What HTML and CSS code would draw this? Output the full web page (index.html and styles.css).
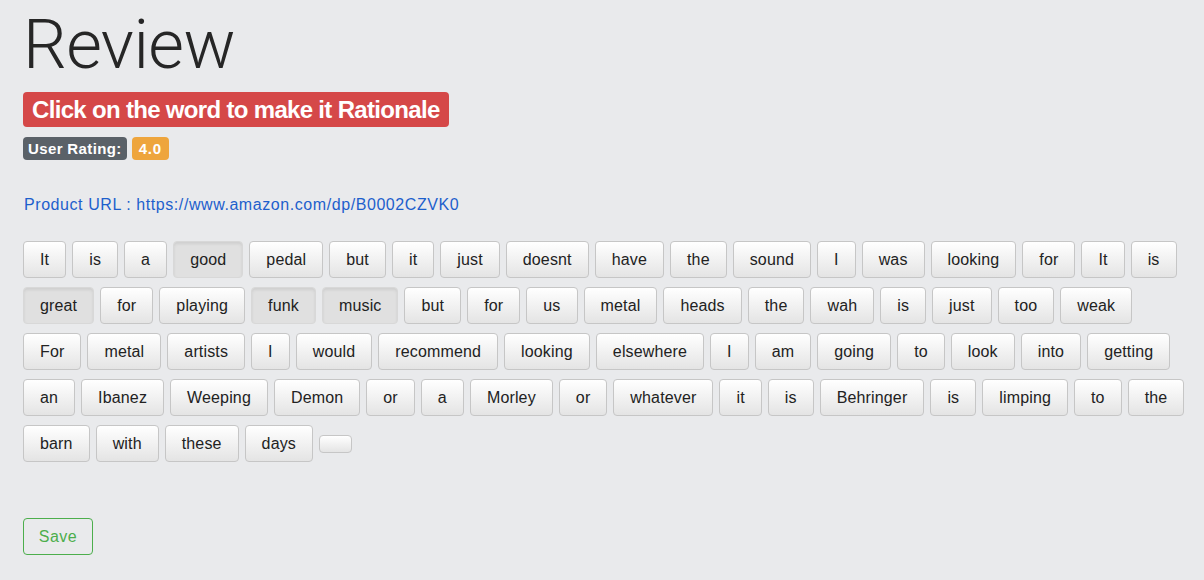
FILE: index.html
```html
<!DOCTYPE html>
<html>
<head>
<meta charset="utf-8">
<link rel="stylesheet" href="styles.css">
</head>
<body>
<div class="page">
  <h1 class="title">Review</h1>
  <div class="notice"><span class="badge badge-red">Click on the word to make it Rationale</span></div>
  <div class="rating"><span class="badge badge-grey">User Rating:</span> <span class="badge badge-orange">4.0</span></div>
  <p class="url">Product URL : https://www.amazon.com/dp/B0002CZVK0</p>
  <div class="words">
    <div class="row">
      <button class="word">It</button><button class="word">is</button><button class="word">a</button><button class="word on">good</button><button class="word">pedal</button><button class="word">but</button><button class="word">it</button><button class="word">just</button><button class="word">doesnt</button><button class="word">have</button><button class="word">the</button><button class="word">sound</button><button class="word">I</button><button class="word">was</button><button class="word">looking</button><button class="word">for</button><button class="word">It</button><button class="word">is</button>
    </div>
    <div class="row">
      <button class="word on">great</button><button class="word">for</button><button class="word">playing</button><button class="word on">funk</button><button class="word on">music</button><button class="word">but</button><button class="word">for</button><button class="word">us</button><button class="word">metal</button><button class="word">heads</button><button class="word">the</button><button class="word">wah</button><button class="word">is</button><button class="word">just</button><button class="word">too</button><button class="word">weak</button>
    </div>
    <div class="row">
      <button class="word">For</button><button class="word">metal</button><button class="word">artists</button><button class="word">I</button><button class="word">would</button><button class="word">recommend</button><button class="word">looking</button><button class="word">elsewhere</button><button class="word">I</button><button class="word">am</button><button class="word">going</button><button class="word">to</button><button class="word">look</button><button class="word">into</button><button class="word">getting</button>
    </div>
    <div class="row">
      <button class="word">an</button><button class="word">Ibanez</button><button class="word">Weeping</button><button class="word">Demon</button><button class="word">or</button><button class="word">a</button><button class="word">Morley</button><button class="word">or</button><button class="word">whatever</button><button class="word">it</button><button class="word">is</button><button class="word">Behringer</button><button class="word">is</button><button class="word">limping</button><button class="word">to</button><button class="word">the</button>
    </div>
    <div class="row">
      <button class="word">barn</button><button class="word">with</button><button class="word">these</button><button class="word">days</button><button class="word empty"></button>
    </div>
  </div>
  <button class="save">Save</button>
</div>
</body>
</html>
```
FILE: styles.css
```css
html, body {
  margin: 0;
  padding: 0;
  background: #e9eaec;
}
body {
  font-family: "Liberation Sans", Arial, sans-serif;
  color: #212529;
}
.page {
  padding: 2px 23px 0 23px;
  width: 1170px;
}
.title {
  margin: 0;
  font-family: Roboto, "Liberation Sans", sans-serif;
  font-weight: 300;
  font-size: 69px;
  line-height: 86px;
  color: #262626;
  letter-spacing: -0.6px;
}
.badge {
  display: inline-block;
  font-weight: 700;
  color: #fff;
  border-radius: 4px;
  line-height: 1;
  white-space: nowrap;
}
.notice {
  margin-top: 4px;
  line-height: 0;
}
.badge-red {
  background: #d54848;
  font-size: 24px;
  padding: 6px 9px 5px 9px;
  letter-spacing: -0.68px;
}
.rating {
  margin-top: 10px;
  line-height: 0;
  display: flex;
  gap: 5px;
}
.badge-grey {
  background: #5a6168;
  font-size: 15px;
  padding: 4px 5px;
  letter-spacing: 0.37px;
}
.badge-orange {
  background: #eea53d;
  font-size: 15px;
  padding: 4px 7px;
  letter-spacing: 0.8px;
}
.url {
  margin: 33px 0 0 1px;
  font-size: 16px;
  line-height: 24px;
  color: #1d5fcc;
  letter-spacing: 0.57px;
}
.words {
  margin-top: 24px;
  display: flex;
  flex-direction: column;
  row-gap: 9px;
}
.row {
  display: flex;
  align-items: center;
  column-gap: 6px;
}
.word {
  font-family: "Liberation Sans", Arial, sans-serif;
  font-size: 16px;
  line-height: 23px;
  height: 37px;
  padding: 6px 16px;
  border: 1px solid #c6c6c6;
  border-radius: 4px;
  color: #222;
  background: linear-gradient(#ffffff, #e4e4e4);
  margin: 0;
  letter-spacing: 0.15px;
  white-space: nowrap;
  cursor: pointer;
}
.word.on {
  background: #e0e0e0;
  border-color: #d8d8d8;
  box-shadow: inset 0 2px 3px rgba(0,0,0,0.08);
}
.word.empty {
  height: 18px;
  width: 33px;
  padding: 0;
}
.save {
  margin-top: 56px;
  display: block;
  font-family: "Liberation Sans", Arial, sans-serif;
  font-size: 16px;
  line-height: 23px;
  height: 37px;
  width: 70px;
  padding: 6px 0;
  background: transparent;
  border: 1px solid #4cae4c;
  color: #4cae4c;
  border-radius: 4px;
  letter-spacing: 0.5px;
}
```
